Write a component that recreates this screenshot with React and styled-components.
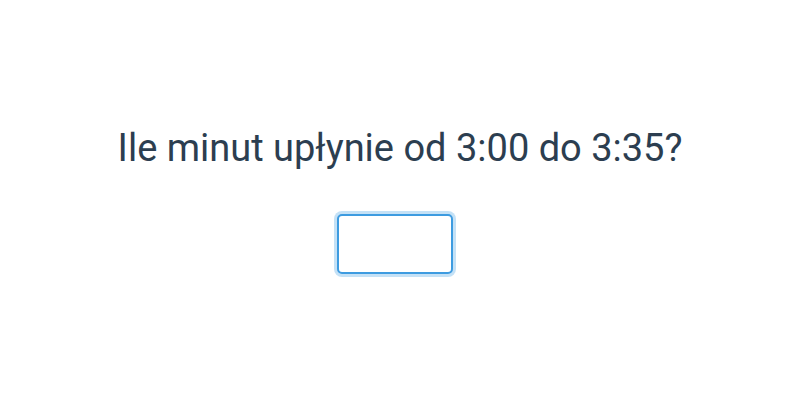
import React, { useState } from "react";
import styled, { createGlobalStyle } from "styled-components";

const GlobalStyle = createGlobalStyle`
  html, body {
    margin: 0;
    padding: 0;
    background: #ffffff;
  }
  body {
    font-family: Roboto, "Liberation Sans", sans-serif;
  }
`;

function App() {
  const [answer, setAnswer] = useState("");

  return (
    <>
      <GlobalStyle />
      <Page>
        <Question>Ile minut upłynie od 3:00 do 3:35?</Question>
        <AnswerInput
          type="text"
          value={answer}
          onChange={(e) => setAnswer(e.target.value)}
        />
      </Page>
    </>
  );
}

const Page = styled.div`
  width: 800px;
  height: 400px;
  display: flex;
  flex-direction: column;
  align-items: center;
  padding-top: 126px;
  box-sizing: border-box;
`;

const Question = styled.h1`
  margin: 0;
  font-family: Roboto, sans-serif;
  font-weight: 400;
  font-size: 38px;
  line-height: 44px;
  color: #2c3e50;
`;

const AnswerInput = styled.input`
  margin-top: 44px;
  margin-left: -10px;
  width: 116px;
  height: 60px;
  box-sizing: border-box;
  border: 2px solid #3d9be0;
  border-radius: 5px;
  box-shadow: 0 0 0 3px rgba(61, 155, 224, 0.3);
  outline: none;
  font-family: Roboto, sans-serif;
  font-size: 24px;
  text-align: center;
  color: #2c3e50;
`;

export default App;
